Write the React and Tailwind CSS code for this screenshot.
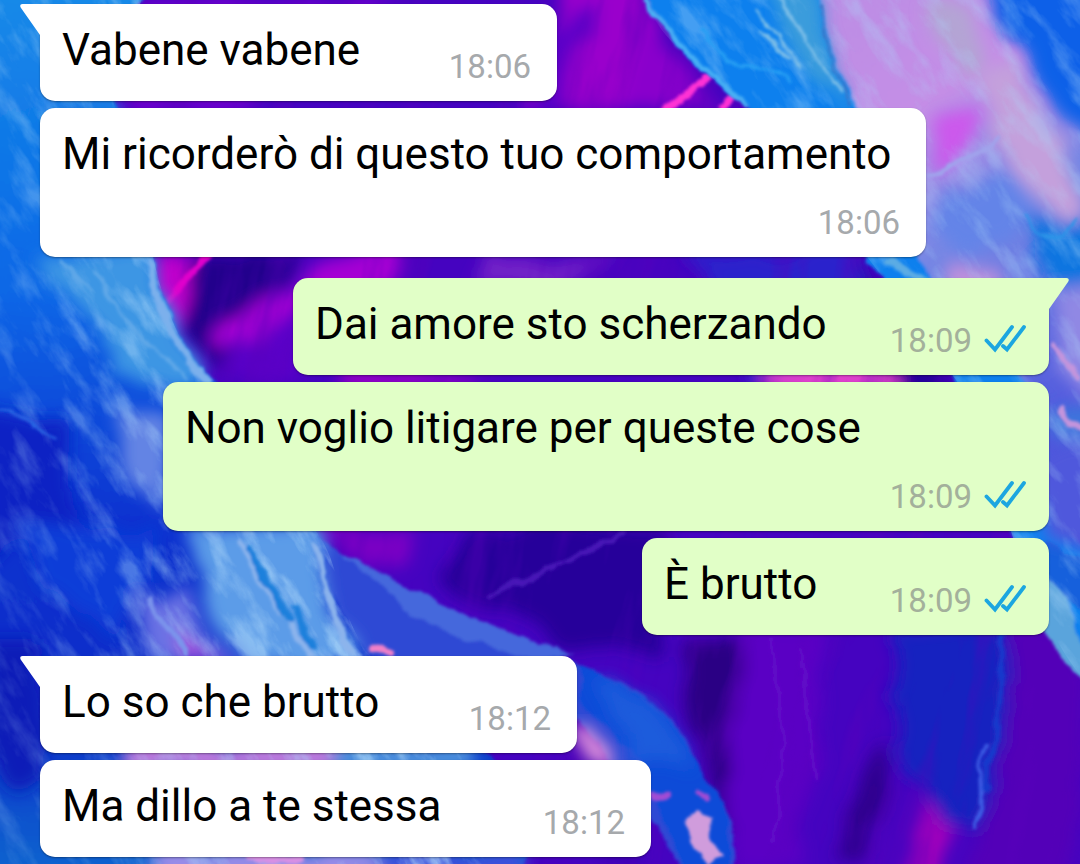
import React from 'react';
import clsx from 'clsx';

const messages = [
  { id: 1, text: 'Vabene vabene', time: '18:06', tail: true, size: 'min-w-[517px]' },
  { id: 2, text: 'Mi ricorderò di questo tuo comportamento', time: '18:06', wrap: true },
  { id: 3, text: 'Dai amore sto scherzando', time: '18:09', mine: true, tail: true, size: 'min-w-[756px]' },
  { id: 4, text: 'Non voglio litigare per queste cose', time: '18:09', mine: true, wrap: true },
  { id: 5, text: 'È brutto', time: '18:09', mine: true, size: 'min-w-[407px]' },
  { id: 6, text: 'Lo so che brutto', time: '18:12', tail: true, size: 'min-w-[537px]' },
  { id: 7, text: 'Ma dillo a te stessa', time: '18:12', size: 'min-w-[611px]' },
];

export default function App() {
  return (
    <main className="relative isolate min-h-screen overflow-hidden bg-[#4503c0] font-['Roboto','Liberation_Sans',sans-serif]">
      <Wallpaper />
      <ul className="flex flex-col pt-1 pb-[7px] pl-10 pr-[31px]">
        {messages.map((message, i) => (
          <Message
            key={message.id}
            {...message}
            // a new sender gets more room above
            spacing={i === 0 ? '' : message.tail ? 'mt-[21px]' : 'mt-[7px]'}
          />
        ))}
      </ul>
    </main>
  );
}

function Message({ text, time, mine, tail, wrap, size, spacing }) {
  return (
    <li
      className={clsx(
        'relative flex max-w-full rounded-[15px] pt-5 pb-[14px] pl-[22px] shadow-[0_1px_2px_rgba(0,0,0,0.35)]',
        mine ? 'self-end bg-[#e1ffc7] pr-[23px]' : 'self-start bg-white pr-[26px]',
        tail && (mine ? 'rounded-tr-none' : 'rounded-tl-none'),
        wrap ? 'w-[886px] flex-col gap-3' : 'items-end justify-between gap-8',
        size,
        spacing
      )}
    >
      {tail && <Tail mine={mine} />}
      <p className="pb-[11px] text-[44px] leading-[52px] text-black">{text}</p>
      <div className="flex shrink-0 items-start gap-3 self-end">
        <time className={clsx('text-[33px] leading-10', mine ? 'text-[#a3b09b]' : 'text-[#a6a9ac]')}>{time}</time>
        {mine && <ReadTicks />}
      </div>
    </li>
  );
}

function Tail({ mine }) {
  return (
    <svg
      className={clsx('absolute top-0 h-[31px] w-5', mine ? 'left-full text-[#e1ffc7]' : 'right-full text-white')}
      viewBox="0 0 20 31"
      fill="currentColor"
      aria-hidden="true"
    >
      {mine ? (
        <path d="M0 0H17.5C20 0 20.3 2.2 19 4L0 31Z" />
      ) : (
        <path d="M20 0H2.5C0 0-.3 2.2 1 4L20 31Z" />
      )}
    </svg>
  );
}

function ReadTicks() {
  return (
    <svg className="mt-[3px] h-[30px] w-[42px]" viewBox="0 0 42 30" fill="none" stroke="#1ca6e0" strokeWidth="3.8" strokeLinecap="round" role="img" aria-label="Letto">
      <path d="M2.5 16.5 11 25.5 28 3" />
      <path d="M19 22 23 25.5 40 3" />
    </svg>
  );
}

// Poured-paint wallpaper
function Wallpaper() {
  return (
    <svg className="absolute inset-0 -z-10 size-full" viewBox="0 0 1080 864" preserveAspectRatio="xMidYMid slice" aria-hidden="true">
      <defs>
        <linearGradient id="leftBlue" x1="0" y1="0" x2="0" y2="1">
          <stop offset="0" stopColor="#168be8" />
          <stop offset="0.35" stopColor="#0b66e6" />
          <stop offset="0.6" stopColor="#0a32d0" />
          <stop offset="0.8" stopColor="#0a2cc8" />
          <stop offset="1" stopColor="#0868d0" />
        </linearGradient>
        <linearGradient id="rightPink" x1="0" y1="0" x2="0.3" y2="1">
          <stop offset="0" stopColor="#bb8de4" />
          <stop offset="0.3" stopColor="#c48ee6" />
          <stop offset="0.55" stopColor="#7486e4" />
          <stop offset="1" stopColor="#4a50dc" />
        </linearGradient>
        <filter id="soft" x="-20%" y="-20%" width="140%" height="140%">
          <feTurbulence type="fractalNoise" baseFrequency="0.02" numOctaves="3" seed="4" />
          <feDisplacementMap in="SourceGraphic" scale="34" xChannelSelector="R" yChannelSelector="G" />
          <feGaussianBlur stdDeviation="8" />
        </filter>
        <filter id="paint" x="-10%" y="-10%" width="120%" height="120%">
          <feTurbulence type="fractalNoise" baseFrequency="0.04" numOctaves="4" seed="9" />
          <feDisplacementMap in="SourceGraphic" scale="12" xChannelSelector="R" yChannelSelector="G" />
          <feGaussianBlur stdDeviation="1.4" />
        </filter>
        <filter id="lightStreaks" x="0" y="0" width="100%" height="100%">
          <feTurbulence type="fractalNoise" baseFrequency="0.05 0.018" numOctaves="5" seed="12" />
          <feColorMatrix values="0 0 0 0 0.42  0 0 0 0 0.68  0 0 0 0 0.95  3 0 0 0 -1.4" />
        </filter>
        <filter id="darkStreaks" x="0" y="0" width="100%" height="100%">
          <feTurbulence type="fractalNoise" baseFrequency="0.03 0.006" numOctaves="4" seed="31" />
          <feColorMatrix values="0 0 0 0 0.1  0 0 0 0 0  0 0 0 0 0.5  3.5 0 0 0 -1.7" />
        </filter>
        {/* streaks are strong along the fold and fade out over the deep blue */}
        <linearGradient id="streakFade" x1="0" y1="0.5" x2="1" y2="0.2">
          <stop offset="0" stopColor="#444" />
          <stop offset="0.3" stopColor="#999" />
          <stop offset="0.6" stopColor="#fff" />
        </linearGradient>
        <mask id="leftMask">
          <path d="M-20-20H150C125 40 112 70 113 101C125 150 140 200 153 257C165 310 180 345 208 382C240 440 290 490 322 540C342 575 335 600 365 650L500 800L480 884H-20Z" fill="url(#streakFade)" />
        </mask>
        <clipPath id="rightClip">
          <path d="M645 0H1080V675C1060 650 1045 620 1020 560L970 400L900 300L755 110C700 70 660 40 645 0Z" />
        </clipPath>
      </defs>

      <rect width="1080" height="864" fill="#4503c0" />

      {/* violet folds in the middle */}
      <g filter="url(#soft)">
        <path d="M130 0H400L250 110H110Z" fill="#6a05cc" />
        <path d="M570 -20H640L690 110H520Z" fill="#9a02cc" />
        <path d="M540 40L600 0L560 110H530Z" fill="#5a04c8" />
        <path d="M640 20L730 110H620Z" fill="#8a04cc" />
        <path d="M150 255H215L165 330Z" fill="#c003cc" />
        <path d="M205 250H300L220 380L175 320Z" fill="#24028c" />
        <path d="M400 225L210 335L225 355L400 280Z" fill="#a602d4" />
        <path d="M310 290L215 385H300Z" fill="#5a05c8" />
        <path d="M480 255H620L560 285H470Z" fill="#7420c8" />
        <path d="M680 250H860L960 400H760Z" fill="#2a24cc" />
        <path d="M860 250L960 400H880Z" fill="#25029c" />
        <path d="M340 370H470V390H340Z" fill="#9004c4" />
        <path d="M770 365H900V395H770Z" fill="#e040cc" />
        <path d="M310 525H420L400 570L350 560Z" fill="#7a04c4" />
        <path d="M470 525H660V660L560 640L440 580Z" fill="#26059a" />
        <path d="M690 630L740 640L735 760L775 864H740L700 740L680 690Z" fill="#2a0284" />
        <path d="M740 630H830L800 864H730Z" fill="#5a04c4" />
        <path d="M880 740L830 864H870L890 790Z" fill="#2e038e" />
        <path d="M900 625H1010L1004 740L985 840L930 820L890 750Z" fill="#1424c0" />
        <path d="M1010 630H1080V884H960L1000 780Z" fill="#5203b8" />
        <path d="M920 805L950 830L935 884H900Z" fill="#a404bc" />
        <path d="M560 700L640 800V864H600Z" fill="#3a04b0" />
      </g>

      <g transform="rotate(12 540 432)" opacity="0.4">
        <rect x="0" y="-200" width="1200" height="1264" filter="url(#darkStreaks)" />
      </g>

      {/* bright magenta and violet hairlines */}
      <g filter="url(#paint)" fill="none" strokeLinecap="round">
        <path d="M168 300L205 255" stroke="#e006cc" strokeWidth="8" />
        <path d="M665 112L708 78M720 108L735 96" stroke="#ff30d4" strokeWidth="8" />
        <path d="M490 595L560 565L625 533" stroke="#4a18b8" strokeWidth="4" />
        <path d="M1003 635L998 720L985 790" stroke="#1838cc" strokeWidth="6" />
        <path d="M985 745C975 780 990 800 974 826" stroke="#3c5ce4" strokeWidth="4" />
        <path d="M770 640L785 740L775 840M800 650L815 780" stroke="#6008c8" strokeWidth="4" />
      </g>

      {/* left mass */}
      <g filter="url(#paint)">
        <path d="M-20-20H150C125 40 112 70 113 101C125 150 140 200 153 257C165 310 180 345 212 382C250 440 290 490 325 540C345 575 335 600 365 650L540 800L520 884H-20Z" fill="url(#leftBlue)" />
        <path d="M325 540C370 575 420 590 470 620L560 655C640 690 680 710 700 770C725 800 740 820 736 884H690L640 800L580 720L365 655L330 590Z" fill="#2e48d4" />
        <path d="M580 664C650 700 680 720 700 770C720 790 735 810 732 884H690L655 800L640 760L578 700Z" fill="#104cd8" />
        <path d="M340 552L470 618L575 655H510L420 620Z" fill="#4468dc" />
      </g>
      <g filter="url(#soft)">
        <path d="M50 100H110L125 180L150 255L60 240Z" fill="#1c7ce4" />
        <path d="M40 255H150L175 330L205 380L160 390L100 340Z" fill="#3e96e4" />
        <path d="M-20 410L60 430L90 520L-20 560Z" fill="#0824c4" />
        <path d="M20 530H160L120 640L60 600Z" fill="#0d3ed8" />
        <path d="M190 525H320L330 600L365 665H250L210 610Z" fill="#5c9ce8" />
        <path d="M135 600L180 590L230 660H150Z" fill="#6a72e4" />
        <path d="M170 620L215 660H190Z" fill="#b04cdc" />
        <path d="M-20 640H45V760L20 800L-20 740Z" fill="#0c1cb8" />
        <path d="M120 400L165 420V510L130 480Z" fill="#6484e4" />
        <path d="M120 740H330V775H120Z" fill="#b878dc" />
        <path d="M330 740H480V775H330Z" fill="#488cdc" />
        <path d="M150 850H400V880H150Z" fill="#9a8ce8" />
        <path d="M380 850H520V880H380Z" fill="#3c50dc" />
        <path d="M590 680L650 700L690 770L640 760Z" fill="#1a5cdc" />
      </g>
      <g mask="url(#leftMask)">
        <g transform="rotate(-32 200 432)">
          <rect x="-300" y="-200" width="1000" height="1264" filter="url(#lightStreaks)" opacity="0.75" />
        </g>
      </g>
      <g filter="url(#paint)" fill="none" strokeLinecap="round">
        <path d="M150 262C160 320 182 350 206 382" stroke="#7cb0ec" strokeWidth="7" />
        <path d="M95 270C120 320 140 340 190 380M60 260L90 290" stroke="#60a8e8" strokeWidth="3" />
        <path d="M240 540C260 590 290 620 310 655M315 545C325 580 328 610 350 650" stroke="#8cb4ec" strokeWidth="6" />
        <path d="M250 550C262 575 278 595 288 620M295 610L312 645" stroke="#1c80dc" strokeWidth="8" />
        <path d="M150 600C170 630 180 640 185 655" stroke="#7c94ec" strokeWidth="5" />
        <path d="M372 648L390 652" stroke="#f080c8" strokeWidth="8" />
        <path d="M0 412C30 412 30 430 55 438" stroke="#2c68e4" strokeWidth="3" />
        <path d="M250 858L300 860" stroke="#d890e4" strokeWidth="8" />
        <path d="M655 796L666 794M702 792L706 795" stroke="#a04cd4" strokeWidth="7" />
      </g>
      <path filter="url(#paint)" d="M682 822L696 812L714 818L708 836L722 858L706 864L692 842Z" fill="#d09cdc" />
      <path filter="url(#soft)" d="M572 722C596 732 610 744 618 760L586 756Z" fill="#dc90dc" />

      {/* right mass */}
      <g filter="url(#paint)">
        <path d="M640 -20H1100V690C1060 650 1045 620 1020 560L970 400L900 300L750 110C700 70 660 40 640 -20Z" fill="#0e80ee" />
        <path d="M820 -20H1100V560C1060 540 1050 480 1040 400L930 280L860 110C840 70 825 50 820 -20Z" fill="url(#rightPink)" />
        <path d="M1046 540L1100 570V620L1046 590Z" fill="#1460dc" />
        <path d="M1030 560L1060 590L1080 640L1100 700C1060 660 1050 640 1030 600Z" fill="#5aa4dc" />
      </g>
      <g filter="url(#soft)">
        <path d="M985 -30H1110V170C1050 120 1030 60 1000 30Z" fill="#0a60e8" />
        <path d="M935 125L980 105L975 145L930 170Z" fill="#cc58ec" />
        <path d="M930 0H970L985 60L960 80Z" fill="#b4a4d4" />
        <path d="M975 70L1010 60L1080 190V230L1010 180Z" fill="#c4a0dc" />
        <path d="M940 190L1010 175L1040 220L970 260L935 230Z" fill="#6484e8" />
        <path d="M1030 225L1100 205V285H1045Z" fill="#0c74e0" />
        <path d="M760 -20H815L835 80L850 110L810 80Z" fill="#3a9cdc" />
        <path d="M1055 290L1100 285V400L1055 370Z" fill="#9088e4" />
        <path d="M1045 410H1100V450L1060 440Z" fill="#3c74dc" />
        <path d="M1020 450H1100V560L1046 540Z" fill="#5058dc" />
        <path d="M940 265L1000 270L1010 290H940Z" fill="#c090dc" />
      </g>
      <g clipPath="url(#rightClip)">
        <g transform="rotate(-36 880 300)">
          <rect x="500" y="-300" width="900" height="1200" filter="url(#lightStreaks)" opacity="0.35" />
        </g>
      </g>
      <g filter="url(#paint)" fill="none" strokeLinecap="round">
        <path d="M646 0C667 40 702 64 748 108" stroke="#48b0f4" strokeWidth="5" />
        <path d="M700 30C730 80 770 60 790 80" stroke="#28a0f4" strokeWidth="3" />
        <path d="M758 10L800 70M780 0L840 90M760 30L785 58" stroke="#80c0e8" strokeWidth="3" />
        <path d="M822 5C822 50 837 65 850 106" stroke="#3c70c4" strokeWidth="2" />
        <path d="M928 175C960 165 980 155 1000 140" stroke="#a0a4ec" strokeWidth="5" />
        <path d="M1055 345L1080 380M1060 410L1080 430" stroke="#c494dc" strokeWidth="6" />
        <path d="M1025 215C1050 245 1060 240 1078 218" stroke="#2c94e8" strokeWidth="3" />
        <path d="M890 262L925 282" stroke="#5cace4" strokeWidth="8" />
      </g>
    </svg>
  );
}
